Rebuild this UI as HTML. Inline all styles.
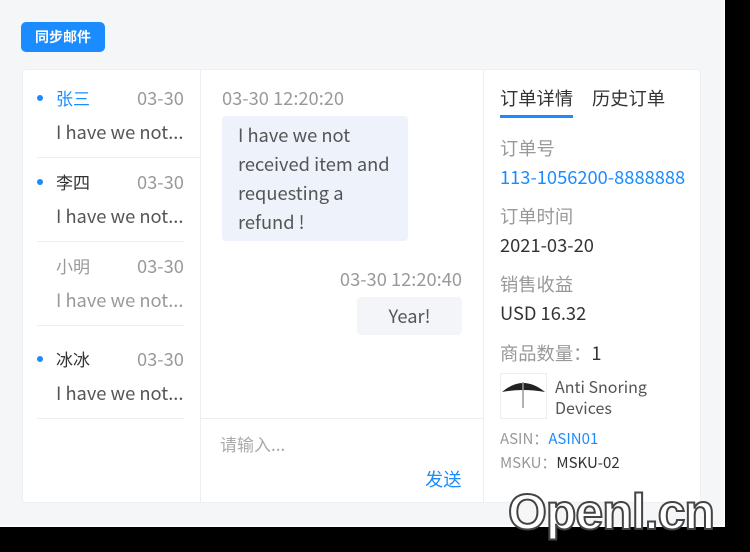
<!DOCTYPE html>
<html><head><meta charset="utf-8"><style>
*{margin:0;padding:0;box-sizing:border-box}
body{width:750px;height:552px;position:relative;overflow:hidden;background:#000;font-family:"Noto Sans CJK SC","Liberation Sans",sans-serif;color:#333}
.pg{position:absolute;left:0;top:0;width:725px;height:527px;background:#f5f6f8;border-right:1px solid #fff;border-bottom:2px solid #fff}
.a{position:absolute;white-space:nowrap;line-height:20px}
.btn{left:21px;top:22px;width:84px;height:30px;background:#1a8cff;border-radius:5px;color:#fff;font-size:14px;font-weight:bold;line-height:30px;text-align:center}
.card{position:absolute;left:22px;top:69px;width:679px;height:434px;background:#fff;border-radius:4px;border:1px solid #eef0f3}
.dot{position:absolute;width:6px;height:6px;border-radius:50%;background:#1a8cff;left:37px}
.n{font-size:17px;left:56px;color:#333}
.d{font-size:18.3px;left:137px;color:#999}
.p{font-size:18.3px;left:56px;color:#555}
.ln{position:absolute;height:1px;background:#eceef1}
.g{color:#999}
.bl{color:#1a8cff}
.f{font-size:18.3px}
</style></head><body>
<div class="pg"></div>
<div class="a btn">同步邮件</div>
<div class="card"></div>
<div class="ln" style="left:200px;top:70px;width:1px;height:433px"></div>
<div class="ln" style="left:483px;top:70px;width:1px;height:433px"></div>

<div class="dot" style="top:95px"></div>
<div class="a n bl" style="top:88px">张三</div>
<div class="a d" style="top:88px">03-30</div>
<div class="a p" style="top:122px">I have we not...</div>
<div class="ln" style="left:37px;top:157px;width:163px"></div>

<div class="dot" style="top:179px"></div>
<div class="a n" style="top:172px">李四</div>
<div class="a d" style="top:172px">03-30</div>
<div class="a p" style="top:206px">I have we not...</div>
<div class="ln" style="left:37px;top:241px;width:147px"></div>

<div class="a n g" style="top:256px">小明</div>
<div class="a d" style="top:256px">03-30</div>
<div class="a p g" style="top:290px">I have we not...</div>
<div class="ln" style="left:37px;top:325px;width:147px"></div>

<div class="dot" style="top:356px"></div>
<div class="a n" style="top:349px">冰冰</div>
<div class="a d" style="top:349px">03-30</div>
<div class="a p" style="top:383px">I have we not...</div>
<div class="ln" style="left:37px;top:418px;width:147px"></div>

<div class="a g f" style="left:222px;top:88px">03-30 12:20:20</div>
<div style="position:absolute;left:222px;top:116px;width:186px;height:125px;background:#eef2fb;border-radius:4px;padding:5px 16px;font-size:18.3px;line-height:29px;color:#555">I have we not received item and requesting a refund !</div>
<div class="a g f" style="left:322px;top:269px;width:140px;text-align:right">03-30 12:20:40</div>
<div class="a" style="left:357px;top:297px;width:105px;height:38px;background:#f3f5f8;border-radius:4px;font-size:18.3px;line-height:38px;text-align:center;color:#555">Year!</div>
<div class="ln" style="left:200px;top:418px;width:283px"></div>
<div class="a" style="left:220px;top:434px;font-size:17px;color:#aaa">请输入...</div>
<div class="a bl f" style="left:425px;top:469px">发送</div>

<div class="a f" style="left:500px;top:88px">订单详情</div>
<div class="a f" style="left:592px;top:88px">历史订单</div>
<div style="position:absolute;left:500px;top:115px;width:73px;height:3px;background:#1a8cff"></div>
<div class="a g f" style="left:500px;top:138px">订单号</div>
<div class="a bl f" style="left:500px;top:167px">113-1056200-8888888</div>
<div class="a g f" style="left:500px;top:206px">订单时间</div>
<div class="a f" style="left:500px;top:235px">2021-03-20</div>
<div class="a g f" style="left:500px;top:274px">销售收益</div>
<div class="a f" style="left:500px;top:303px">USD 16.32</div>
<div class="a f" style="left:500px;top:343px"><span class="g">商品数量：</span>1</div>
<div style="position:absolute;left:500px;top:373px;width:47px;height:46px;border:1px solid #eee">
<svg width="45" height="44" viewBox="0 0 45 44"><path d="M1 18 Q22 0 44 18 Q22 14 1 18Z" fill="#222"/><line x1="22" y1="8" x2="22" y2="34" stroke="#999" stroke-width="1.5"/></svg></div>
<div class="a" style="left:555px;top:376px;font-size:16px;color:#555">Anti Snoring</div>
<div class="a" style="left:555px;top:397px;font-size:16px;color:#555">Devices</div>
<div class="a" style="left:500px;top:429px;font-size:15px"><span class="g">ASIN：</span><span class="bl">ASIN01</span></div>
<div class="a" style="left:500px;top:453px;font-size:15px"><span class="g">MSKU：</span>MSKU-02</div>

<div class="a" style="left:508px;top:484px;font-family:'Liberation Sans',sans-serif;font-size:50px;line-height:56px;color:#fff;font-weight:bold;-webkit-text-stroke:2px #444;letter-spacing:-1px">Openl.cn</div>
</body></html>
